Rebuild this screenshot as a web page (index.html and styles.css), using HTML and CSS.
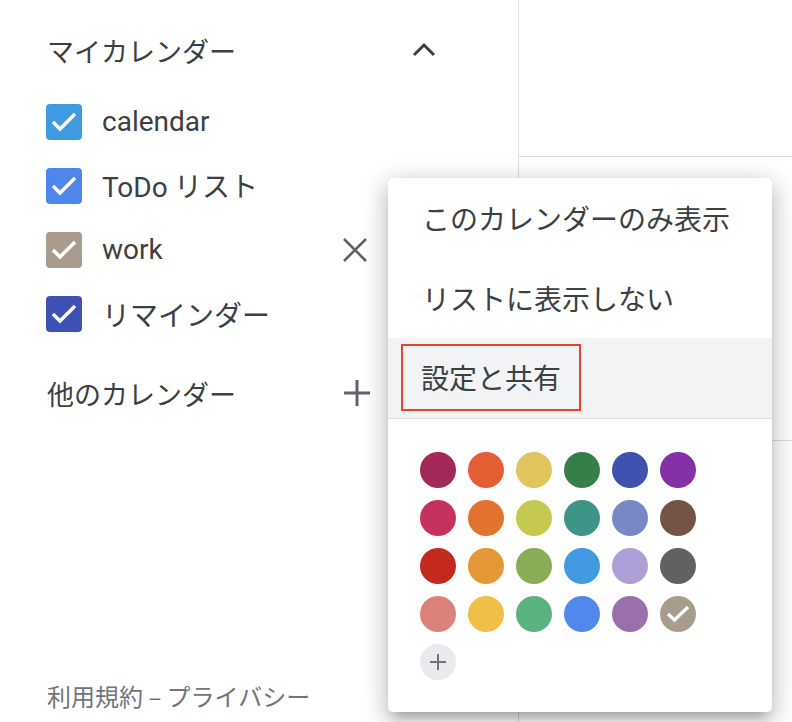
FILE: index.html
```html
<!DOCTYPE html>
<html lang="ja">
<head>
    <meta charset="UTF-8">
    <meta name="viewport" content="width=device-width, initial-scale=1.0">
    <title>カレンダー</title>
    <link rel="stylesheet" href="styles.css">
</head>
<body>
    <div class="app">
        <aside class="sidebar">
            <div class="section-head">
                <span class="section-title">マイカレンダー</span>
                <span class="icon-btn chevron">
                    <svg width="24" height="24" viewBox="0 0 24 24"><path d="M2 17 L12 7 L22 17" fill="none" stroke="#3c4043" stroke-width="3"/></svg>
                </span>
            </div>

            <ul class="cal-list">
                <li class="cal-item">
                    <span class="check" style="background:#3f9be1"><svg width="36" height="36" viewBox="0 0 36 36"><path d="M7 18 L14 25 L29 10" fill="none" stroke="#fff" stroke-width="3.5"/></svg></span>
                    <span class="cal-name latin">calendar</span>
                </li>
                <li class="cal-item">
                    <span class="check" style="background:#4f86ec"><svg width="36" height="36" viewBox="0 0 36 36"><path d="M7 18 L14 25 L29 10" fill="none" stroke="#fff" stroke-width="3.5"/></svg></span>
                    <span class="cal-name"><span class="latin">ToDo</span> リスト</span>
                </li>
                <li class="cal-item">
                    <span class="check" style="background:#a89c8f"><svg width="36" height="36" viewBox="0 0 36 36"><path d="M7 18 L14 25 L29 10" fill="none" stroke="#fff" stroke-width="3.5"/></svg></span>
                    <span class="cal-name latin">work</span>
                    <span class="icon-btn remove">
                        <svg width="26" height="26" viewBox="0 0 26 26"><path d="M2 2 L24 24 M24 2 L2 24" fill="none" stroke="#5f6368" stroke-width="2.6"/></svg>
                    </span>
                </li>
                <li class="cal-item">
                    <span class="check" style="background:#3f51b5"><svg width="36" height="36" viewBox="0 0 36 36"><path d="M7 18 L14 25 L29 10" fill="none" stroke="#fff" stroke-width="3.5"/></svg></span>
                    <span class="cal-name">リマインダー</span>
                </li>
            </ul>

            <div class="section-head other">
                <span class="section-title">他のカレンダー</span>
                <span class="icon-btn add">
                    <svg width="28" height="28" viewBox="0 0 28 28"><path d="M14 1 L14 27 M1 14 L27 14" fill="none" stroke="#5f6368" stroke-width="3"/></svg>
                </span>
            </div>

            <div class="footer">利用規約 – プライバシー</div>
        </aside>

        <main class="grid">
            <div class="cell first"></div>
            <div class="cell second"></div>
        </main>
    </div>

    <div class="menu">
        <div class="menu-item">このカレンダーのみ表示</div>
        <div class="menu-item">リストに表示しない</div>
        <div class="menu-item hover"><span class="marked">設定と共有</span></div>

        <div class="palette">
            <span class="swatch" style="background:#a12859"></span>
            <span class="swatch" style="background:#e55e33"></span>
            <span class="swatch" style="background:#e1c45b"></span>
            <span class="swatch" style="background:#377f4a"></span>
            <span class="swatch" style="background:#3f52b0"></span>
            <span class="swatch" style="background:#8431a5"></span>

            <span class="swatch" style="background:#c6325e"></span>
            <span class="swatch" style="background:#e2732e"></span>
            <span class="swatch" style="background:#c5c950"></span>
            <span class="swatch" style="background:#3f9488"></span>
            <span class="swatch" style="background:#7987c7"></span>
            <span class="swatch" style="background:#735447"></span>

            <span class="swatch" style="background:#c4291d"></span>
            <span class="swatch" style="background:#e49737"></span>
            <span class="swatch" style="background:#88ad54"></span>
            <span class="swatch" style="background:#4199e0"></span>
            <span class="swatch" style="background:#ae9fd6"></span>
            <span class="swatch" style="background:#616161"></span>

            <span class="swatch" style="background:#da8279"></span>
            <span class="swatch" style="background:#efbf47"></span>
            <span class="swatch" style="background:#5ab37f"></span>
            <span class="swatch" style="background:#5188ec"></span>
            <span class="swatch" style="background:#9a6fad"></span>
            <span class="swatch" style="background:#a89c8f">
                <svg width="36" height="36" viewBox="0 0 36 36"><path d="M8 18 L14.5 24 L28 11" fill="none" stroke="#fff" stroke-width="3.2"/></svg>
            </span>

            <span class="swatch custom">
                <svg width="18" height="18" viewBox="0 0 18 18"><path d="M9 1 L9 17 M1 9 L17 9" fill="none" stroke="#70757a" stroke-width="2"/></svg>
            </span>
        </div>
    </div>
</body>
</html>
```

FILE: styles.css
```css
* {
    box-sizing: border-box;
}

body {
    margin: 0;
    width: 792px;
    height: 722px;
    overflow: hidden;
    background: #fff;
    color: #3c4043;
    font-family: "Noto Sans CJK JP", Roboto, sans-serif;
}

.latin {
    font-family: Roboto, "Noto Sans CJK JP", sans-serif;
}

.app {
    display: flex;
    height: 722px;
}

/* left column */
.sidebar {
    width: 519px;
    flex-shrink: 0;
    border-right: 1px solid #dadce0;
    padding: 18px 69px 0 46px;
    display: flex;
    flex-direction: column;
}

.section-head {
    height: 64px;
    display: flex;
    align-items: center;
    font-size: 27px;
    line-height: 1;
}

.section-title {
    flex: 1;
    padding-left: 1px;
}

.icon-btn {
    width: 40px;
    height: 40px;
    display: flex;
    align-items: center;
    justify-content: center;
}

.chevron {
    margin-right: 5px;
}

.cal-list {
    list-style: none;
    margin: 8px 0 0;
    padding: 0;
}

.cal-item {
    height: 64px;
    display: flex;
    align-items: center;
}

.check {
    width: 36px;
    height: 36px;
    border-radius: 4px;
    flex-shrink: 0;
    display: flex;
}

.cal-name {
    flex: 1;
    margin-left: 20px;
    font-size: 28px;
    line-height: 1;
}

.remove {
    margin-right: 74px;
}

.other {
    margin-top: 15px;
}

.add {
    margin-right: 72px;
}

.footer {
    margin-top: auto;
    margin-bottom: 9px;
    padding-left: 1px;
    font-size: 24px;
    color: #70757a;
}

/* calendar grid behind the menu */
.grid {
    flex: 1;
}

.cell {
    border-bottom: 1px solid #dadce0;
}

.cell.first {
    height: 157px;
}

.cell.second {
    height: 284px;
}

/* popup menu */
.menu {
    position: absolute;
    left: 388px;
    top: 178px;
    width: 384px;
    height: 534px;
    background: #fff;
    border-radius: 5px;
    box-shadow: 0 8px 20px 2px rgba(0,0,0,0.14), 0 6px 28px 4px rgba(0,0,0,0.12), 0 10px 10px -6px rgba(0,0,0,0.2);
}

.menu-item {
    height: 80px;
    padding-left: 34px;
    display: flex;
    align-items: center;
    font-size: 28px;
    line-height: 1;
}

.menu-item.hover {
    background: #f1f3f4;
    border-bottom: 1px solid #dadce0;
    height: 81px;
}

.marked {
    height: 67px;
    margin-left: -21px;
    margin-top: -2px;
    padding: 0 18px;
    border: 2px solid #e5452e;
    display: flex;
    align-items: center;
}

.palette {
    padding: 33px 32px 32px;
    display: grid;
    grid-template-columns: repeat(6, 36px);
    grid-auto-rows: 36px;
    gap: 12px;
}

.swatch {
    width: 36px;
    height: 36px;
    border-radius: 50%;
    display: flex;
    align-items: center;
    justify-content: center;
}

.swatch.custom {
    background: #e8eaed;
}
```
